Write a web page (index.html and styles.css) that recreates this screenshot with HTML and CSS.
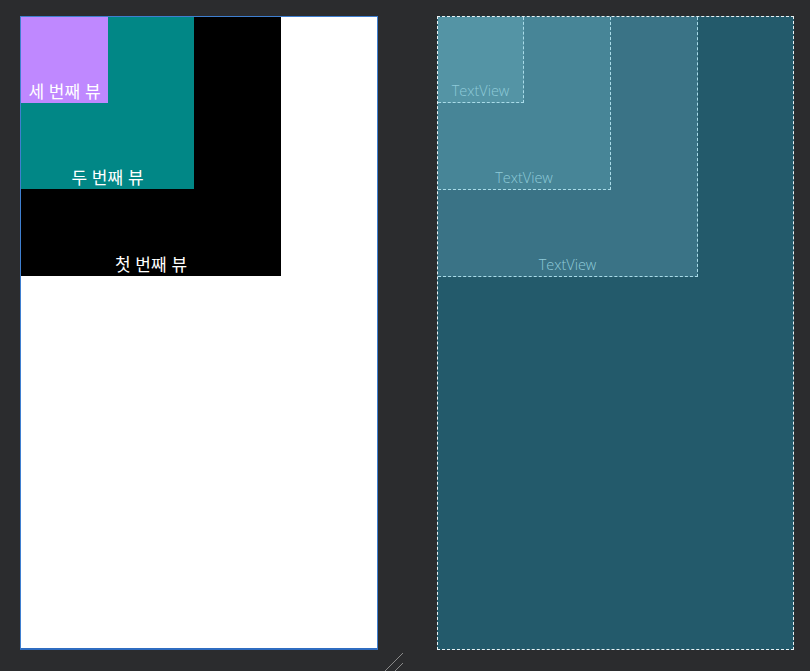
FILE: index.html
```html
<!DOCTYPE html>
<html lang="ko">
<head>
<meta charset="utf-8">
<link rel="stylesheet" href="styles.css">
</head>
<body>
<div class="stage">
  <div class="design">
    <div class="view v1">
      <div class="view v2">
        <div class="view v3">
          <span class="label">세 번째 뷰</span>
        </div>
        <span class="label">두 번째 뷰</span>
      </div>
      <span class="label">첫 번째 뷰</span>
    </div>
  </div>
  <div class="blueprint">
    <div class="bp b1">
      <div class="bp b2">
        <div class="bp b3">
          <span class="bplabel">TextView</span>
        </div>
        <span class="bplabel">TextView</span>
      </div>
      <span class="bplabel">TextView</span>
    </div>
  </div>
</div>
<svg class="handle" width="24" height="20" viewBox="0 0 24 20">
  <line x1="1" y1="20" x2="20" y2="1" stroke="#8a8a8a" stroke-width="1"/>
  <line x1="11" y1="20" x2="20" y2="11" stroke="#8a8a8a" stroke-width="1"/>
</svg>
</body>
</html>
```
FILE: styles.css
```css
html, body {
  margin: 0;
  padding: 0;
  background: #2b2c2e;
  width: 810px;
  height: 671px;
  overflow: hidden;
}
.stage {
  display: flex;
  gap: 59px;
  padding: 16px 0 0 20px;
}
.design {
  width: 356px;
  height: 631px;
  border: 1px solid #3f7fd0;
  border-bottom: 2px solid #2f6cc0;
  background: #ffffff;
}
.view {
  display: flex;
  flex-direction: column;
  align-items: flex-start;
}
.v1 { width: 260px; height: 259px; background: #000000; }
.v2 { width: 173px; height: 172px; background: #018786; }
.v3 { width: 87px; height: 86px; background: #bf88ff; }
.label {
  margin-top: auto;
  align-self: stretch;
  text-align: center;
  color: #ffffff;
  font-family: "Noto Sans CJK KR", "Noto Sans", sans-serif;
  font-size: 17px;
  line-height: 20px;
  padding-bottom: 2px;
  white-space: nowrap;
}
.blueprint {
  width: 355px;
  height: 632px;
  border: 1px dashed #e8f1f4;
  background: #235a6b;
}
.bp {
  display: flex;
  flex-direction: column;
  align-items: flex-start;
  border-right: 1px dashed #a9dbe8;
  border-bottom: 1px dashed #a9dbe8;
}
.b1 { width: 259px; height: 259px; background: #3a7386; }
.b2 { width: 172px; height: 172px; background: #478597; }
.b3 { width: 85px; height: 85px; background: #5494a5; }
.bplabel {
  margin-top: auto;
  align-self: stretch;
  text-align: center;
  color: #8ecad8;
  font-family: "Open Sans", "Liberation Sans", sans-serif;
  font-weight: 300;
  font-size: 14.5px;
  line-height: 16px;
  padding-bottom: 3px;
  white-space: nowrap;
}
.handle {
  position: absolute;
  left: 383px;
  top: 652px;
}
```
